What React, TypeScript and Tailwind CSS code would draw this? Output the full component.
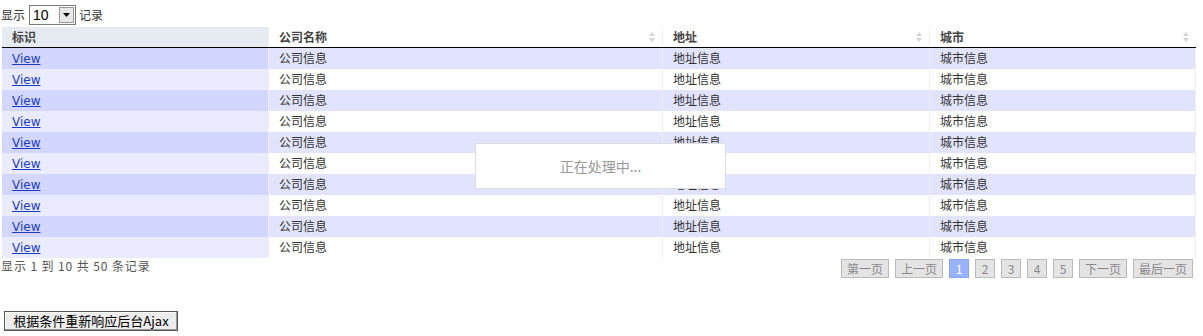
const rows = Array.from({ length: 10 }, (_, i) => i);

function SortIcon() {
  return (
    <svg width="8" height="12" viewBox="0 0 8 12" className="shrink-0">
      <path d="M4 1 L7 5 L1 5 Z" fill="#d4d4d4" />
      <path d="M4 11 L7 7 L1 7 Z" fill="#d4d4d4" />
    </svg>
  );
}

const pageBtn =
  "h-[19px] border border-[#bbb] bg-[#e4e4e4] text-[#888] text-[12px] leading-[17px] text-center";

export default function App() {
  return (
    <div className="w-[1203px] h-[336px] bg-white text-[12px] text-[#333] font-['Noto_Sans_CJK_SC',sans-serif] relative">
      {/* length menu */}
      <div className="flex items-center h-[26px] pl-[1px] pt-[3px]">
        <span>显示</span>
        <div className="ml-[4px] flex items-center h-[20px] w-[47px] border border-[#7a7a7a] bg-white">
          <span className="flex-1 pl-[3px] text-[14px] text-black font-['Liberation_Sans',sans-serif] leading-none">10</span>
          <span className="w-[15px] h-[16px] mr-[1px] border border-[#999] bg-[#e8e8e8] flex items-center justify-center">
            <svg width="7" height="4" viewBox="0 0 7 4"><path d="M0 0 L7 0 L3.5 4 Z" fill="#000" /></svg>
          </span>
        </div>
        <span className="ml-[3px]">记录</span>
      </div>

      {/* table */}
      <div className="mx-[2px] mt-[1px] w-[1194px]">
        <div className="grid grid-cols-[266px_394px_267px_267px] h-[21px] border-b border-black font-bold text-[#444]">
          <div className="bg-[#e6eaf1] pl-[10px] leading-[20px]">标识</div>
          <div className="flex items-center justify-between pl-[10px] pr-[6px] border-l border-[#eee]">
            <span>公司名称</span>
            <SortIcon />
          </div>
          <div className="flex items-center justify-between pl-[10px] pr-[6px] border-l border-[#eee]">
            <span>地址</span>
            <SortIcon />
          </div>
          <div className="flex items-center justify-between pl-[10px] pr-[6px] border-l border-[#eee]">
            <span>城市</span>
            <SortIcon />
          </div>
        </div>
        {rows.map((i) => {
          const odd = i % 2 === 0;
          return (
            <div
              key={i}
              className={`grid grid-cols-[266px_394px_267px_267px] h-[21px] leading-[19px] ${odd ? "bg-[#e2e4ff]" : "bg-white"}`}
            >
              <div className={`pl-[10px] ${odd ? "bg-[#d3d6ff]" : "bg-[#eaebff]"}`}>
                <a href="#" className="text-[#1a3cc0] underline font-['DejaVu_Sans',sans-serif] text-[12px]">View</a>
              </div>
              <div className="pl-[10px] border-l border-[#eee]">公司信息</div>
              <div className="pl-[10px] border-l border-[#eee]">地址信息</div>
              <div className="pl-[10px] border-l border-[#eee] border-r">城市信息</div>
            </div>
          );
        })}
      </div>

      {/* footer */}
      <div className="flex justify-between items-start mt-[1px]">
        <div className="pl-[1px] leading-[14px] text-[#555] tracking-[0.9px]">显示 1 到 10 共 50 条记录</div>
        <div className="flex gap-[6px] pr-[10px]">
          <span className={`${pageBtn} w-[48px]`}>第一页</span>
          <span className={`${pageBtn} w-[48px]`}>上一页</span>
          <span className="h-[19px] w-[20px] border border-[#8aa4ee] bg-[#99b3ff] text-white text-[12px] leading-[17px] text-center">1</span>
          <span className={`${pageBtn} w-[20px]`}>2</span>
          <span className={`${pageBtn} w-[20px]`}>3</span>
          <span className={`${pageBtn} w-[20px]`}>4</span>
          <span className={`${pageBtn} w-[20px]`}>5</span>
          <span className={`${pageBtn} w-[48px]`}>下一页</span>
          <span className={`${pageBtn} w-[60px]`}>最后一页</span>
        </div>
      </div>

      <div className="mt-[33px] pl-[4px]">
        <button className="h-[20px] w-[174px] border border-[#555] bg-[#ececec] text-black text-[13px] leading-[18px] shadow-[inset_-1px_-1px_0_#999,inset_1px_1px_0_#fff]">
          根据条件重新响应后台Ajax
        </button>
      </div>

      {/* processing overlay */}
      <div className="absolute left-[475px] top-[143px] w-[251px] h-[46px] bg-white border border-[#ddd] flex items-center justify-center text-[14px] text-[#999]">
        正在处理中...
      </div>
    </div>
  );
}
